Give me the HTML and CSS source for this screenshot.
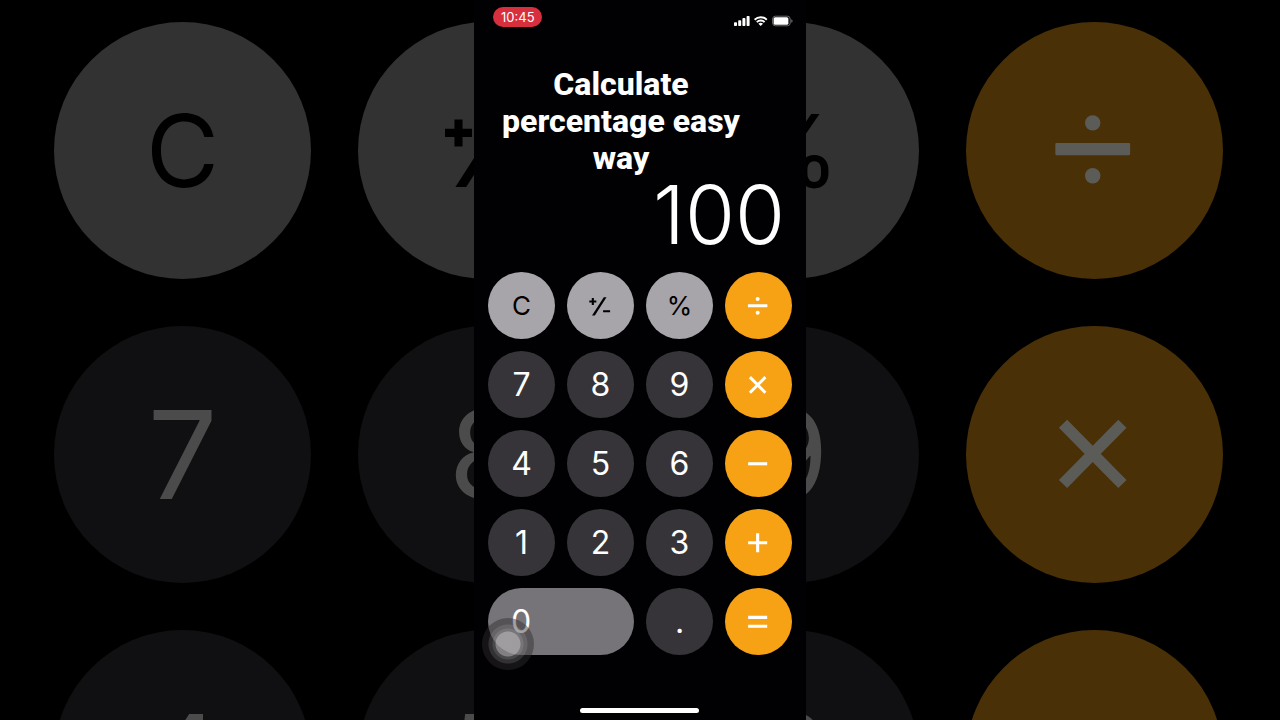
FILE: index.html
```
<!DOCTYPE html>
<html lang="en">
<head>
    <meta charset="UTF-8">
    <meta name="viewport" content="width=device-width, initial-scale=1.0">
    <title>Calculate percentage easy way</title>
    <link rel="stylesheet" href="styles.css">
</head>
<body>
    <!-- Shared key symbols -->
    <svg class="symbols" aria-hidden="true">
        <symbol id="sign" viewBox="0 0 24 24">
            <path d="M1.3 7.5h7M4.8 4v7M15 17.2h7" fill="none" stroke="currentColor" stroke-width="2.1"/>
            <path d="M4 21.5h2.8L18.4 3.3h-2.7z" fill="currentColor"/>
        </symbol>
        <symbol id="divide" viewBox="0 0 24 24">
            <rect x="1.9" y="10.1" width="19.4" height="3.2" rx="0.3" fill="currentColor"/>
            <circle cx="11.6" cy="4.9" r="2" fill="currentColor"/>
            <circle cx="11.6" cy="18.6" r="2" fill="currentColor"/>
        </symbol>
        <symbol id="times" viewBox="0 0 24 24">
            <path d="M3.9 4.1l15.4 15.6M19.3 4.1L3.9 19.7" fill="none" stroke="currentColor" stroke-width="3"/>
        </symbol>
        <symbol id="minus" viewBox="0 0 24 24">
            <path d="M2.1 11.7h19" fill="none" stroke="currentColor" stroke-width="3.1"/>
        </symbol>
        <symbol id="plus" viewBox="0 0 24 24">
            <path d="M2.1 11.7h19M11.6 2.3v18.8" fill="none" stroke="currentColor" stroke-width="3.1"/>
        </symbol>
        <symbol id="equals" viewBox="0 0 24 24">
            <path d="M2.1 7.3h19M2.1 16.2h19" fill="none" stroke="currentColor" stroke-width="3.1"/>
        </symbol>
    </svg>

    <div class="backdrop" aria-hidden="true">
        <span class="key function">C</span>
        <span class="key function"><svg><use href="#sign"/></svg></span>
        <span class="key function">%</span>
        <span class="key operator"><svg><use href="#divide"/></svg></span>
        <span class="key">7</span>
        <span class="key">8</span>
        <span class="key">9</span>
        <span class="key operator"><svg><use href="#times"/></svg></span>
        <span class="key">4</span>
        <span class="key">5</span>
        <span class="key">6</span>
        <span class="key operator"><svg><use href="#minus"/></svg></span>
    </div>

    <main class="phone">
        <header class="status-bar">
            <span class="time">10:45</span>
            <svg class="status-icons" viewBox="0 0 60 12" role="img" aria-label="Signal, Wi-Fi and battery">
                <g fill="#fff">
                    <rect x="0" y="7.2" width="3" height="3.8" rx="0.8"/>
                    <rect x="4.2" y="5.2" width="3" height="5.8" rx="0.8"/>
                    <rect x="8.4" y="3.1" width="3" height="7.9" rx="0.8"/>
                    <rect x="12.6" y="1" width="3" height="10" rx="0.8"/>
                    <path d="M26.7 11L24.4 8.7a3.4 3.4 0 0 1 4.6 0z"/>
                </g>
                <g fill="none" stroke="#fff" stroke-width="1.9">
                    <path d="M20.6 4.7a8.8 8.8 0 0 1 12.2 0M22.8 7.1a5.6 5.6 0 0 1 7.8 0"/>
                </g>
                <rect x="38.6" y="1.2" width="17.6" height="9.6" rx="2.8" fill="none" stroke="#77777a" stroke-width="0.9"/>
                <rect x="39.6" y="2.2" width="14.8" height="7.6" rx="1.6" fill="#fff"/>
                <path d="M57.3 4.2a1.9 1.9 0 0 1 0 3.6z" fill="#77777a"/>
            </svg>
        </header>

        <h1>Calculate percentage easy way</h1>
        <output class="display">100</output>

        <div class="keypad">
            <button class="key function">C</button>
            <button class="key function" aria-label="Plus or minus"><svg><use href="#sign"/></svg></button>
            <button class="key function">%</button>
            <button class="key operator" aria-label="Divide"><svg><use href="#divide"/></svg></button>
            <button class="key">7</button>
            <button class="key">8</button>
            <button class="key">9</button>
            <button class="key operator" aria-label="Multiply"><svg><use href="#times"/></svg></button>
            <button class="key">4</button>
            <button class="key">5</button>
            <button class="key">6</button>
            <button class="key operator" aria-label="Subtract"><svg><use href="#minus"/></svg></button>
            <button class="key">1</button>
            <button class="key">2</button>
            <button class="key">3</button>
            <button class="key operator" aria-label="Add"><svg><use href="#plus"/></svg></button>
            <button class="key zero pressed">0<span class="touch"></span></button>
            <button class="key">.</button>
            <button class="key operator" aria-label="Equals"><svg><use href="#equals"/></svg></button>
        </div>

        <div class="home-indicator"></div>
    </main>
</body>
</html>
```
FILE: styles.css
```
* {
    box-sizing: border-box;
}
body {
    display: grid;
    justify-items: center;
    min-height: 100vh;
    margin: 0;
    background-color: #000;
    color: #fff;
    font-family: Inter, "Liberation Sans", sans-serif;
}
.symbols {
    position: absolute;
    width: 0;
    height: 0;
}

/* Keys */
.key {
    display: flex;
    align-items: center;
    justify-content: center;
    aspect-ratio: 1;
    padding: 0;
    border: none;
    border-radius: 50%;
    background-color: #363438;
    color: #fff;
    font-family: inherit;
    font-size: 32px;
    line-height: 1;
}
.key svg {
    width: 36%;
    aspect-ratio: 1;
}
.key.function {
    background-color: #a7a5a9;
    color: #000;
    font-size: 26px;
}
.key.operator {
    background-color: #f7a214;
}

/* Enlarged keys behind the phone */
.backdrop {
    grid-area: 1 / 1;
    display: grid;
    grid-template-columns: repeat(4, 1fr);
    align-content: start;
    gap: 47px;
    width: 100%;
    height: 100vh;
    padding: 22px 57px 0 54px;
    overflow: hidden;
}
.backdrop .key {
    background-color: #101012;
    color: #4b4b4b;
    font-size: 123px;
}
.backdrop .key.function {
    background-color: #323232;
    color: #000;
    font-size: 100px;
}
.backdrop .key.operator {
    background-color: #4a3007;
    color: #5b5c57;
}

/* Phone */
.phone {
    grid-area: 1 / 1;
    z-index: 1;
    display: flex;
    flex-direction: column;
    width: calc(100vh * 83 / 180);
    min-width: 300px;
    min-height: 100vh;
    padding: 7px 15px 7px 14px;
    background-color: #010103;
}
.status-bar {
    display: flex;
    align-items: center;
    justify-content: space-between;
    padding-left: 5px;
}
.time {
    padding: 0 7px 0 8px;
    border-radius: 10px;
    background-color: #d72f3d;
    font-size: 13px;
    line-height: 20px;
}
.status-icons {
    width: 60px;
    height: 12px;
    margin: 7px -3px 0 0;
}
h1 {
    margin: 39px 51px 0 14px;
    font-family: Roboto, sans-serif;
    font-size: 32px;
    font-weight: 800;
    line-height: 37px;
    text-align: center;
}
.display {
    padding-right: 6px;
    font-size: 81px;
    font-weight: 300;
    line-height: 76px;
    text-align: right;
}
.keypad {
    display: grid;
    grid-template-columns: repeat(4, 1fr);
    grid-auto-rows: minmax(67px, auto);
    gap: 12px;
    margin-top: 19px;
}
.keypad .key {
    padding-top: 1px;
}
.key.zero {
    position: relative;
    grid-column: span 2;
    justify-content: flex-start;
    aspect-ratio: auto;
    padding-left: 23px;
    border-radius: 34px;
}
.key.pressed {
    background-color: #767478;
}
.touch {
    position: absolute;
    left: -6px;
    bottom: -15px;
    width: 52px;
    height: 52px;
    border-radius: 50%;
    background: radial-gradient(circle, rgba(172, 170, 172, 0.75) 12px, rgba(120, 118, 120, 0.6) 13px 15px, rgba(90, 88, 90, 0.55) 16px 19px, rgba(46, 42, 46, 0.45) 20px);
}
.home-indicator {
    align-self: center;
    width: 119px;
    height: 5px;
    margin-top: auto;
    border-radius: 3px;
    background-color: #fff;
}
```
